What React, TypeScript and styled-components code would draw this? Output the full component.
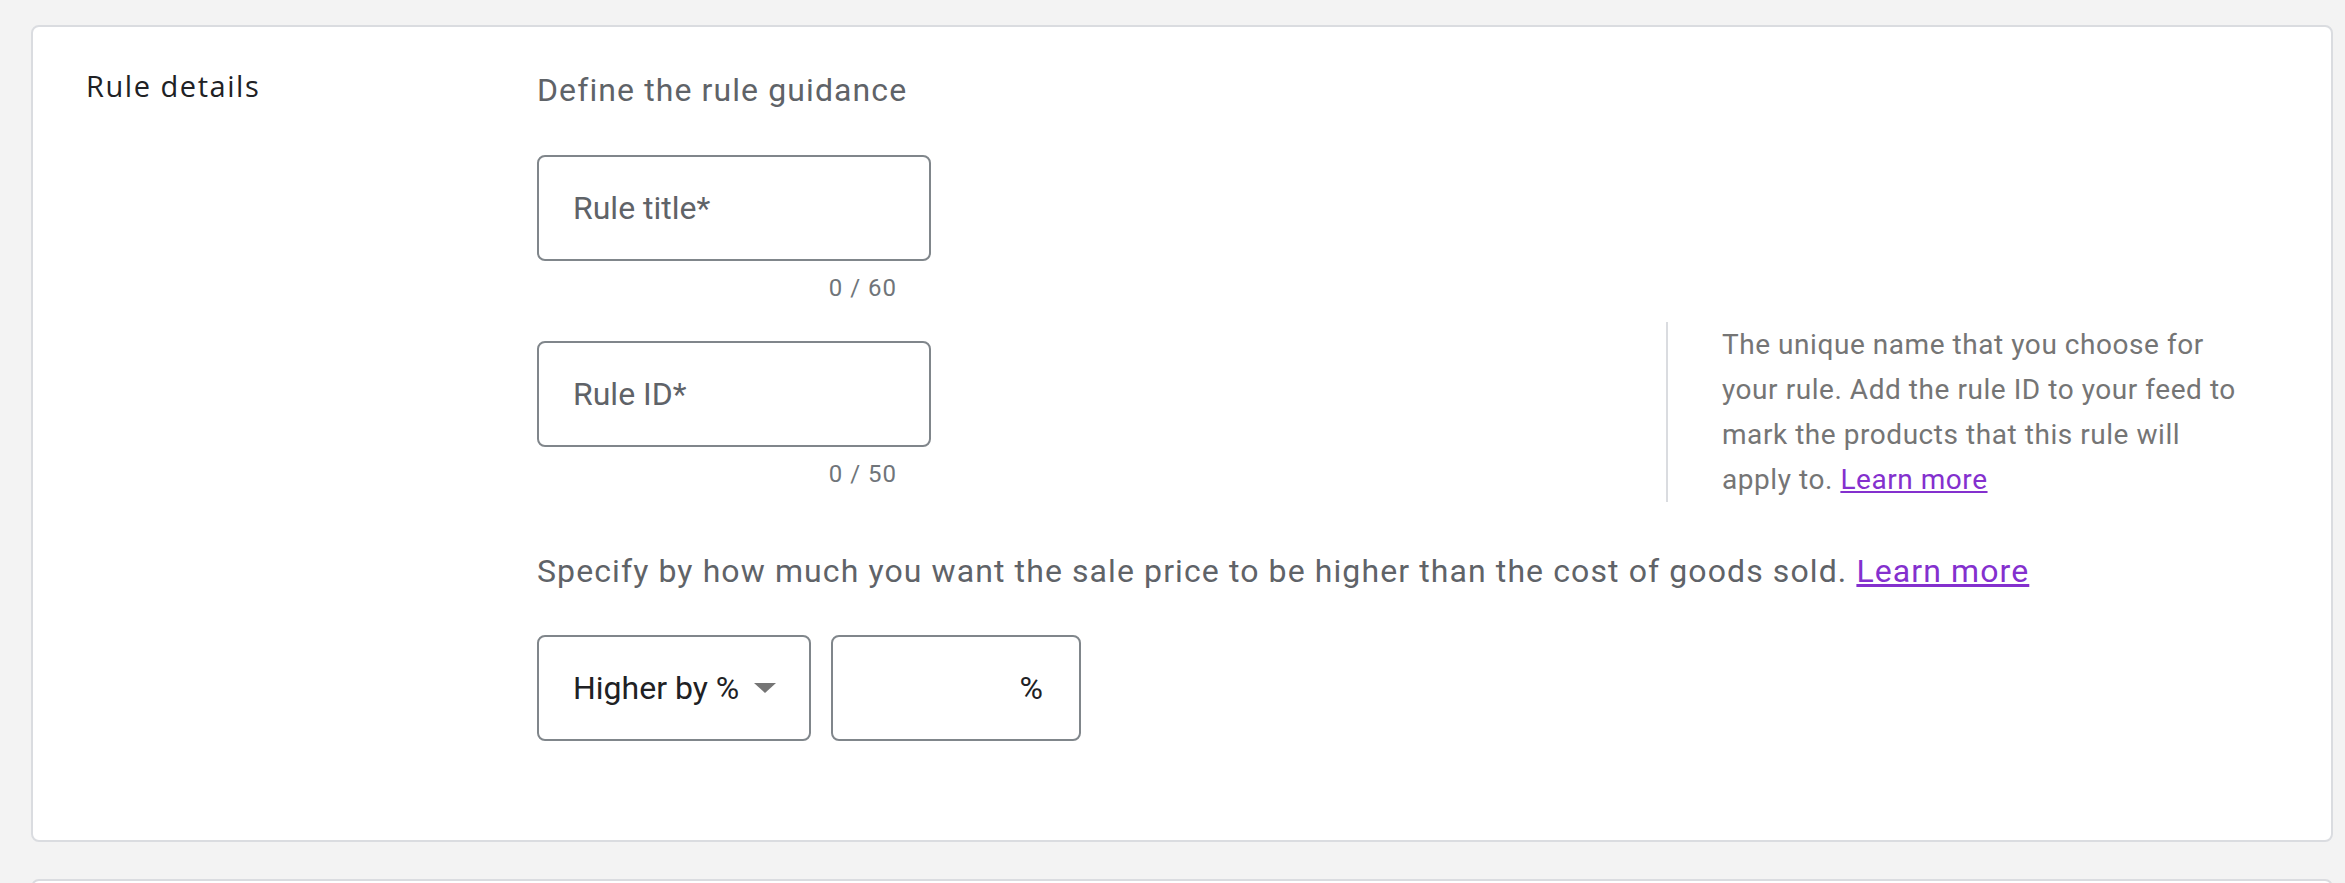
import React from "react";
import styled, { createGlobalStyle, css } from "styled-components";

const GlobalStyle = createGlobalStyle`
  html, body {
    margin: 0;
    padding: 0;
    background: #f3f3f3;
    overflow: hidden;
  }
  body {
    font-family: Roboto, "Liberation Sans", Arial, sans-serif;
  }
`;

const Page = styled.div`
  box-sizing: border-box;
  min-height: 100vh;
  padding: 25px 12px 0 31px;
  display: flex;
  flex-direction: column;
  gap: 37px;
  background: #f3f3f3;
`;

const Card = styled.section<{ $filler?: boolean }>`
  display: flex;
  align-items: flex-start;
  background: #ffffff;
  border: 2px solid #dadce0;
  border-radius: 8px;
  padding: ${(p) => (p.$filler ? "0" : "39px 79px 99px 53px")};
  min-height: ${(p) => (p.$filler ? "220px" : "0")};
`;

const SectionTitle = styled.h2`
  flex: none;
  width: 451px;
  margin: 0;
  font-family: "Open Sans", Roboto, sans-serif;
  font-size: 29px;
  font-weight: 400;
  line-height: 40px;
  letter-spacing: 1.55px;
  color: #202124;
`;

const Main = styled.div`
  flex: 1;
  min-width: 0;
  display: flex;
  flex-direction: column;
`;

const Lead = styled.p<{ $mt?: number }>`
  margin: ${(p) => p.$mt ?? 0}px 0 0 0;
  font-size: 32px;
  line-height: 48px;
  letter-spacing: 1.1px;
  color: #5f6368;
`;

const Link = styled.a`
  color: #8430ce;
  text-decoration: underline;
  cursor: pointer;
`;

const FieldBlock = styled.div<{ $mt?: number; $pt?: number }>`
  flex: none;
  width: 394px;
  display: flex;
  flex-direction: column;
  margin-top: ${(p) => p.$mt ?? 0}px;
  padding-top: ${(p) => p.$pt ?? 0}px;
`;

const outlined = css`
  box-sizing: border-box;
  height: 106px;
  border: 2px solid #80868b;
  border-radius: 8px;
  background: #ffffff;
  display: flex;
  align-items: center;
`;

const TextBox = styled.div`
  ${outlined};
  width: 100%;
  padding: 0 34px;
`;

const FloatingLabel = styled.span`
  font-size: 32px;
  line-height: 48px;
  color: #5f6368;
  white-space: nowrap;
`;

const Counter = styled.div`
  align-self: flex-end;
  margin-top: 11px;
  padding-right: 34px;
  font-size: 24px;
  line-height: 32px;
  letter-spacing: 1px;
  color: #70757a;
`;

const HelpRow = styled.div`
  display: flex;
  align-items: center;
  margin-top: 18px;
`;

const HelpNote = styled.p`
  flex: none;
  width: 530px;
  margin: 0 0 0 auto;
  padding-left: 54px;
  border-left: 2px solid #dadce0;
  font-size: 28px;
  line-height: 45px;
  letter-spacing: 0.55px;
  color: #757575;
`;

const ControlRow = styled.div`
  display: flex;
  gap: 20px;
  margin-top: 40px;
`;

const SelectBox = styled.button`
  ${outlined};
  width: 274px;
  padding: 0 33px 0 34px;
  justify-content: space-between;
  font-family: Roboto, "Liberation Sans", Arial, sans-serif;
  cursor: pointer;
`;

const SelectValue = styled.span`
  font-size: 32px;
  line-height: 48px;
  color: #202124;
  white-space: nowrap;
`;

const AmountBox = styled.label`
  ${outlined};
  width: 250px;
  padding: 0 36px 0 34px;
  gap: 6px;
`;

const AmountInput = styled.input`
  flex: 1;
  min-width: 0;
  border: none;
  outline: none;
  background: transparent;
  padding: 0;
  font-family: Roboto, "Liberation Sans", Arial, sans-serif;
  font-size: 32px;
  line-height: 48px;
  color: #202124;
  text-align: right;
`;

const Suffix = styled.span`
  font-size: 32px;
  line-height: 48px;
  color: #202124;
`;

const DropArrow = () => (
  <svg width="22" height="10" viewBox="0 0 22 10" aria-hidden="true">
    <polygon points="0,0 22,0 11,10" fill="#757575" />
  </svg>
);

export default function App() {
  return (
    <>
      <GlobalStyle />
      <Page>
        <Card>
          <SectionTitle>Rule details</SectionTitle>
          <Main>
            <Lead>Define the rule guidance</Lead>

            <FieldBlock $mt={41}>
              <TextBox>
                <FloatingLabel>Rule title*</FloatingLabel>
              </TextBox>
              <Counter>0 / 60</Counter>
            </FieldBlock>

            <HelpRow>
              <FieldBlock $pt={7}>
                <TextBox>
                  <FloatingLabel>Rule ID*</FloatingLabel>
                </TextBox>
                <Counter>0 / 50</Counter>
              </FieldBlock>
              <HelpNote>
                The unique name that you choose for your rule. Add the rule ID to
                your feed to mark the products that this rule will apply to.{" "}
                <Link>Learn more</Link>
              </HelpNote>
            </HelpRow>

            <Lead $mt={45}>
              Specify by how much you want the sale price to be higher than the
              cost of goods sold. <Link>Learn more</Link>
            </Lead>

            <ControlRow>
              <SelectBox type="button">
                <SelectValue>Higher by %</SelectValue>
                <DropArrow />
              </SelectBox>
              <AmountBox>
                <AmountInput type="text" aria-label="Percentage" />
                <Suffix>%</Suffix>
              </AmountBox>
            </ControlRow>
          </Main>
        </Card>
        <Card $filler />
      </Page>
    </>
  );
}
